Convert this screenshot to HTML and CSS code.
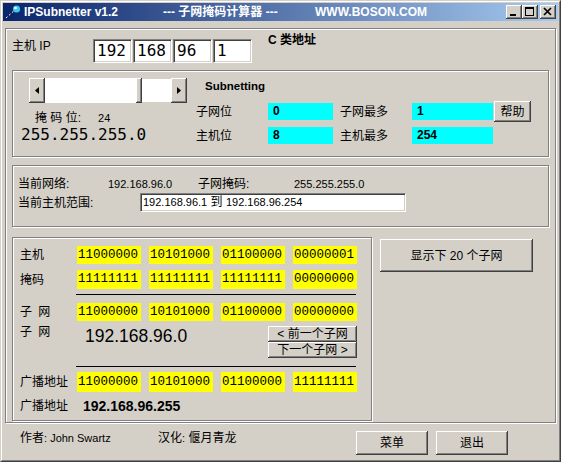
FILE: index.html
```html
<!DOCTYPE html>
<html>
    <head>
        <meta charset="UTF-8">
        <title>IPSubnetter v1.2</title>
        <link rel="stylesheet" href="styles.css">
    </head>
    <body>
        <div id="win">
            <div class="frame">
                <!-- 标题栏 -->
                <div class="titlebar">
                    <svg class="appicon" width="16" height="16" viewBox="0 0 16 16">
                        <path d="M1 14 L11 5" stroke="#0a246a" stroke-width="3"/>
                        <path d="M1 14 L11 5" stroke="#fff" stroke-width="1" stroke-dasharray="2 2"/>
                        <circle cx="11.5" cy="5" r="3.6" fill="#38c8f0"/>
                        <circle cx="10.5" cy="4" r="1.3" fill="#fff"/>
                    </svg>
                    <span class="t-name">IPSubnetter v1.2</span>
                    <span class="t-cn">--- 子网掩码计算器 ---</span>
                    <span class="t-url">WWW.BOSON.COM</span>
                    <div class="tbtns">
                        <span class="tbtn"><svg width="16" height="14"><rect x="4" y="9" width="6" height="2"/></svg></span>
                        <span class="tbtn"><svg width="16" height="14"><path d="M3 2h9v9h-9z M4 4v6h7v-6z" fill-rule="evenodd"/></svg></span>
                        <span class="tbtn close"><svg width="16" height="14"><path d="M4 3 L11 10 M11 3 L4 10" stroke="#000" stroke-width="1.7"/></svg></span>
                    </div>
                </div>

                <div class="panel">
                    <!-- 主机IP -->
                    <div class="ip-row">
                        <span class="ip-label">主机 IP</span>
                        <div class="ipbox">192</div>
                        <div class="ipbox">168</div>
                        <div class="ipbox">96</div>
                        <div class="ipbox">1</div>
                        <span class="ip-class">C 类地址</span>
                    </div>

                    <!-- 掩码位 / Subnetting -->
                    <div class="group g-subnet">
                        <div class="mask-col">
                            <div class="scroll">
                                <span class="sb-btn"><svg width="4" height="7"><path d="M4 0 L0 3.5 L4 7z"/></svg></span>
                                <span class="sb-track t1"></span>
                                <span class="sb-thumb"></span>
                                <span class="sb-track t2"></span>
                                <span class="sb-btn"><svg width="4" height="7"><path d="M0 0 L4 3.5 L0 7z"/></svg></span>
                            </div>
                            <div class="mask-bits">掩 码 位:<span class="mask-num">24</span></div>
                            <div class="mask-ip">255.255.255.0</div>
                        </div>
                        <div class="sub-col">
                            <div class="sub-title">Subnetting</div>
                            <div class="sub-row">
                                <span class="sub-label">子网位</span>
                                <span class="cyan c1">0</span>
                                <span class="sub-label l2">子网最多</span>
                                <span class="cyan c2">1</span>
                                <button class="btn help">帮助</button>
                            </div>
                            <div class="sub-row r2">
                                <span class="sub-label">主机位</span>
                                <span class="cyan c1">8</span>
                                <span class="sub-label l2">主机最多</span>
                                <span class="cyan c2">254</span>
                            </div>
                        </div>
                    </div>

                    <!-- 当前网络 -->
                    <div class="group g-net">
                        <div class="net-row">
                            <span class="n1">当前网络:</span>
                            <span class="n2 num">192.168.96.0</span>
                            <span class="n3">子网掩码:</span>
                            <span class="num">255.255.255.0</span>
                        </div>
                        <div class="net-row r2">
                            <span class="n-range">当前主机范围:</span>
                            <div class="range-box"><span class="num">192.168.96.1</span> 到 <span class="num">192.168.96.254</span></div>
                        </div>
                    </div>

                    <div class="lower">
                        <!-- 二进制 -->
                        <div class="group g-bin">
                            <div class="bin-row b1">
                                <span class="b-label">主机</span>
                                <div class="bits"><span>11000000</span><span>10101000</span><span>01100000</span><span>00000001</span></div>
                            </div>
                            <div class="bin-row b2">
                                <span class="b-label">掩码</span>
                                <div class="bits"><span>11111111</span><span>11111111</span><span>11111111</span><span>00000000</span></div>
                            </div>
                            <div class="rule"></div>
                            <div class="bin-row b3">
                                <span class="b-label wide">子 网</span>
                                <div class="bits"><span>11000000</span><span>10101000</span><span>01100000</span><span>00000000</span></div>
                            </div>
                            <div class="bin-row b4">
                                <span class="b-label wide">子 网</span>
                                <span class="big-ip">192.168.96.0</span>
                                <div class="nav-btns">
                                    <button class="btn nav">&lt; 前一个子网</button>
                                    <button class="btn nav">下一个子网 &gt;</button>
                                </div>
                            </div>
                            <div class="rule r-b"></div>
                            <div class="bin-row b5">
                                <span class="b-label">广播地址</span>
                                <div class="bits"><span>11000000</span><span>10101000</span><span>01100000</span><span>11111111</span></div>
                            </div>
                            <div class="bin-row b6">
                                <span class="b-label">广播地址</span>
                                <span class="bc-ip">192.168.96.255</span>
                            </div>
                        </div>
                        <button class="btn show20">显示下 20 个子网</button>
                    </div>
                </div>

                <!-- 底部 -->
                <div class="footer">
                    <span class="author">作者<span class="num">: John Swartz</span></span>
                    <span class="trans">汉化<span class="num">:</span> 偃月青龙</span>
                    <button class="btn foot">菜单</button>
                    <button class="btn foot">退出</button>
                </div>
            </div>
        </div>
    </body>
</html>
```

FILE: styles.css
```css
*{
    margin: 0;
    padding: 0;
    box-sizing: border-box;
}
body{
    background-color: #d4d0c8;
    font: 12px/14px "Liberation Sans", "Noto Sans CJK SC", sans-serif;
    color: #000;
}
#win{
    width: 561px;
    height: 462px;
    background-color: #d4d0c8;
    border: 1px solid;
    border-color: #d4d0c8 #404040 #404040 #d4d0c8;
}
.frame{
    height: 100%;
    border: 1px solid;
    border-color: #fff #808080 #808080 #fff;
    padding: 1px;
    display: flex;
    flex-direction: column;
}

/* 标题栏 */
.titlebar{
    height: 18px;
    display: flex;
    align-items: center;
    background: linear-gradient(to right, #0a246a, #a6caf0);
    color: #fff;
    font-weight: bold;
    white-space: nowrap;
}
.appicon{
    margin-left: 2px;
}
.t-name{
    margin-left: 3px;
    width: 139px;
}
.t-cn{
    width: 152px;
}
.t-url{
    flex: 1;
}
.tbtns{
    display: flex;
    margin-right: 2px;
}
.tbtn{
    display: block;
    width: 16px;
    height: 14px;
    background-color: #d4d0c8;
    box-shadow: inset -1px -1px #404040, inset 1px 1px #fff, inset -2px -2px #808080;
}
.tbtn svg{
    display: block;
}
.tbtn.close{
    margin-left: 2px;
}

/* 面板 */
.panel{
    margin: 7px 2px 0;
    height: 395px;
    border: 1px solid #808080;
    box-shadow: inset 1px 1px #fff, 1px 1px #fff;
    padding-left: 6px;
}
.group{
    border: 1px solid #808080;
    box-shadow: inset 1px 1px #fff, 1px 1px #fff;
    width: 537px;
}

/* 主机IP */
.ip-row{
    display: flex;
    margin-top: 10px;
    height: 24px;
}
.ip-label{
    width: 81px;
}
.ipbox{
    width: 39px;
    height: 24px;
    margin-right: 1px;
    background-color: #fff;
    border: 1px solid;
    border-color: #808080 #fff #fff #808080;
    box-shadow: inset 1px 1px #404040, inset -1px -1px #d4d0c8;
    padding-left: 3px;
    font: 16px/21px "DejaVu Sans Mono", monospace;
}
.ip-class{
    margin: -6px 0 0 15px;
    font-weight: bold;
}

/* 掩码位 */
.g-subnet{
    margin-top: 7px;
    height: 87px;
    display: flex;
}
.mask-col{
    width: 183px;
}
.scroll{
    display: flex;
    margin: 7px 0 0 16px;
    width: 158px;
    height: 25px;
    background-color: #fff;
}
.sb-btn, .sb-thumb{
    background-color: #d4d0c8;
    box-shadow: inset -1px -1px #404040, inset 1px 1px #fff, inset -2px -2px #808080;
}
.sb-btn{
    width: 16px;
    display: flex;
    align-items: center;
    justify-content: center;
}
.sb-btn svg{
    display: block;
}
.sb-thumb{
    width: 6px;
}
.sb-track.t1{
    width: 91px;
}
.sb-track.t2{
    width: 29px;
    box-shadow: inset 0 1px #d4d0c8, inset 0 -1px #d4d0c8;
}
.mask-bits{
    margin: 8px 0 0 22px;
    word-spacing: 0;
}
.mask-num{
    margin-left: 17px;
    font-size: 11px;
}
.mask-ip{
    margin: 2px 0 0 8px;
    font: 16px/16px "DejaVu Sans Mono", monospace;
}

.sub-title{
    margin: 8px 0 0 9px;
    font-size: 11.5px;
    font-weight: bold;
}
.sub-row{
    display: flex;
    align-items: center;
    height: 21px;
    margin-top: 8px;
}
.sub-row.r2{
    margin-top: 3px;
}
.sub-label{
    width: 72px;
}
.sub-label.l2{
    margin-left: 7px;
}
.cyan{
    height: 17px;
    background-color: #00ffff;
    padding-left: 5px;
    font-weight: bold;
    line-height: 17px;
}
.cyan.c1{
    width: 65px;
}
.cyan.c2{
    width: 81px;
}

/* 按钮 */
.btn{
    display: flex;
    align-items: center;
    justify-content: center;
    border: none;
    background-color: #d4d0c8;
    box-shadow: inset -1px -1px #404040, inset 1px 1px #fff, inset -2px -2px #808080;
    font: inherit;
    color: #000;
    white-space: nowrap;
}
.btn.help{
    margin-left: 1px;
    width: 37px;
    height: 21px;
}

/* 当前网络 */
.g-net{
    margin-top: 8px;
    height: 62px;
}
.num{
    font-size: 11px;
}
.net-row{
    display: flex;
    align-items: center;
    margin: 11px 0 0 5px;
}
.net-row.r2{
    margin-top: 2px;
    height: 19px;
}
.n1, .n2{
    width: 90px;
}
.n3{
    width: 96px;
}
.n-range{
    width: 122px;
}
.range-box{
    width: 266px;
    height: 19px;
    background-color: #fff;
    border: 1px solid;
    border-color: #808080 #fff #fff #808080;
    box-shadow: inset 1px 1px #404040, inset -1px -1px #d4d0c8;
    padding-left: 2px;
    line-height: 17px;
}

/* 二进制 */
.lower{
    display: flex;
    align-items: flex-start;
    margin-top: 10px;
}
.g-bin{
    width: 360px;
    height: 184px;
}
.bin-row{
    display: flex;
    align-items: center;
    padding-left: 7px;
}
.b-label{
    width: 57px;
}
.b-label.wide{
    word-spacing: 3px;
}
.bits{
    display: flex;
    gap: 8px;
}
.bits span{
    width: 64px;
    height: 18px;
    background-color: #ffff00;
    padding-left: 1px;
    font: 12.5px/18px "Liberation Mono", monospace;
}
.b1{
    margin-top: 8px;
}
.b2{
    margin-top: 6px;
}
.b2 .bits span{
    height: 19px;
}
.rule{
    margin: 5px 0 0 63px;
    width: 280px;
    height: 1px;
    background-color: #000;
}
.b3{
    margin-top: 8px;
}
.b4{
    margin-top: 5px;
    height: 32px;
    padding-right: 14px;
    align-items: flex-start;
}
.b4 .b-label{
    margin-top: -1px;
}
.big-ip{
    margin-left: 8px;
    font-size: 17.5px;
    line-height: 20px;
}
.nav-btns{
    margin-left: auto;
}
.btn.nav{
    width: 89px;
    height: 16px;
}
.rule.r-b{
    margin-top: 8px;
}
.b5{
    margin-top: 5px;
}
.b5 .bits span{
    height: 20px;
    line-height: 20px;
}
.b6{
    margin-top: 7px;
}
.bc-ip{
    margin-left: 6px;
    font-size: 14px;
    font-weight: bold;
}
.btn.show20{
    margin: 2px 0 0 8px;
    width: 153px;
    height: 33px;
}

/* 底部 */
.footer{
    display: flex;
    align-items: flex-start;
    height: 36px;
    padding: 8px 0 0 17px;
}
.author{
    width: 138px;
}
.trans{
    margin-right: auto;
}
.btn.foot{
    width: 72px;
    height: 24px;
    margin-right: 8px;
}
.btn.foot:last-child{
    margin-right: 50px;
}
```
